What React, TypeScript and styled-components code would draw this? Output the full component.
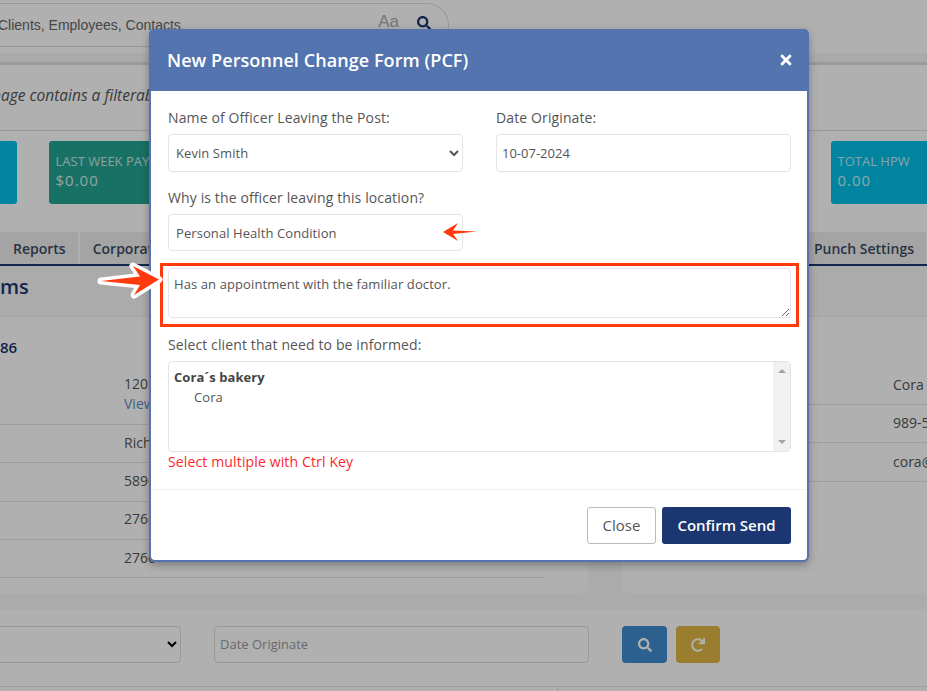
import React from "react";
import styled, { createGlobalStyle } from "styled-components";
import { FaSearch, FaRedo, FaTimes } from "react-icons/fa";

const GlobalStyle = createGlobalStyle`
html, body {
    margin: 0;
    padding: 0;
    background: #fff;
}
* {
    box-sizing: border-box;
}
body {
    font-family: "Open Sans", sans-serif;
    font-size: 14px;
    color: #555;
}
`;

const kpis = [
    { color: "#00bfe8", label: "", value: "" },
    { color: "#24a493", label: "LAST WEEK PAY", value: "$0.00" },
    { color: "#24a493", label: "", value: "" },
    { color: "#24a493", label: "", value: "" },
    { color: "#24a493", label: "", value: "" },
    { color: "#00bfe8", label: "TOTAL HPW", value: "0.00" },
];

const App = () => {
    return (
        <Page>
            <GlobalStyle />

            <TopBar>
                <SearchPill>
                    <SearchText>Clients, Employees, Contacts</SearchText>
                    <CaseToggle>Aa</CaseToggle>
                    <SearchIcon>
                        <FaSearch />
                    </SearchIcon>
                </SearchPill>
            </TopBar>
            <Strip />

            <Intro>page contains a filterable</Intro>

            <KpiRow>
                {kpis.map((k, i) => (
                    <KpiCard key={i} $color={k.color}>
                        <KpiLabel>{k.label}</KpiLabel>
                        <KpiValue>{k.value}</KpiValue>
                    </KpiCard>
                ))}
            </KpiRow>

            <TabBar>
                <TabGroup>
                    <Tab>Reports</Tab>
                    <Tab>Corporate</Tab>
                </TabGroup>
                <TabGroup>
                    <Tab>Punch Settings</Tab>
                </TabGroup>
            </TabBar>

            <SectionHead>ms</SectionHead>

            <Panels>
                <LeftPanel>
                    <PanelTitle>86</PanelTitle>
                    <TallRow>
                        <span>1205</span>
                        <RowLink>View</RowLink>
                    </TallRow>
                    <InfoRow>Richard</InfoRow>
                    <InfoRow>5896</InfoRow>
                    <InfoRow>2766</InfoRow>
                    <InfoRow>2766</InfoRow>
                </LeftPanel>
                <RightPanel>
                    <PanelTitle />
                    <RightRow>Cora</RightRow>
                    <RightRow>989-555</RightRow>
                    <RightRow>cora@</RightRow>
                </RightPanel>
            </Panels>

            <FilterRow>
                <FilterSelect>
                    <option></option>
                </FilterSelect>
                <FilterInput placeholder="Date Originate" />
                <FilterButtons>
                    <IconButton $color="#3f8bd0">
                        <FaSearch />
                    </IconButton>
                    <IconButton $color="#e0b545">
                        <FaRedo />
                    </IconButton>
                </FilterButtons>
            </FilterRow>
            <TableHead>
                <TableHeadCell />
            </TableHead>

            <Backdrop />

            <Modal>
                <ModalHeader>
                    <ModalTitle>New Personnel Change Form (PCF)</ModalTitle>
                    <CloseX>
                        <FaTimes />
                    </CloseX>
                </ModalHeader>

                <ModalBody>
                    <TwoCols>
                        <Field>
                            <Label>Name of Officer Leaving the Post:</Label>
                            <Select defaultValue="Kevin Smith">
                                <option>Kevin Smith</option>
                            </Select>
                        </Field>
                        <Field>
                            <Label>Date Originate:</Label>
                            <DateInput defaultValue="10-07-2024" />
                        </Field>
                    </TwoCols>

                    <TwoCols>
                        <Field>
                            <Label>Why is the officer leaving this location?</Label>
                            <ReasonInput defaultValue="Personal Health Condition" />
                        </Field>
                    </TwoCols>

                    <NoteWrap>
                        <Note defaultValue="Has an appointment with the familiar doctor." />
                        <Highlight />
                    </NoteWrap>

                    <Field>
                        <Label>Select client that need to be informed:</Label>
                        <ListBox>
                            <ListItems>
                                <GroupName>Cora´s bakery</GroupName>
                                <GroupItem>Cora</GroupItem>
                            </ListItems>
                            <ScrollTrack>
                                <ArrowUp />
                                <ArrowDown />
                            </ScrollTrack>
                        </ListBox>
                        <Hint>Select multiple with Ctrl Key</Hint>
                    </Field>
                </ModalBody>

                <ModalFooter>
                    <CloseButton>Close</CloseButton>
                    <ConfirmButton>Confirm Send</ConfirmButton>
                </ModalFooter>
            </Modal>

            <Callouts viewBox="0 0 927 691">
                <path
                    d="M101 281 L140 276.5 L133 266 L159 279.5 L134 295 L140 285 Z"
                    fill="#ff3a0c"
                    stroke="#fff"
                    strokeWidth="7"
                    strokeLinejoin="round"
                    paintOrder="stroke"
                />
                <path
                    d="M443 232 L458 223 L453 230.5 L477 231.5 L453 234 L458 241 Z"
                    fill="#ff3a0c"
                />
            </Callouts>
        </Page>
    );
};

export default App;

const Page = styled.div`
position: relative;
width: 927px;
height: 691px;
overflow: hidden;
background-color: #fff;
`;

const TopBar = styled.div`
height: 53px;
padding-top: 3px;
`;

const SearchPill = styled.div`
width: 449px;
height: 44px;
display: flex;
align-items: center;
border: 1px solid #ddd;
border-left: none;
border-radius: 0 22px 22px 0;
`;

const SearchText = styled.div`
margin-left: -2px;
flex: 1;
font-family: "Liberation Sans", Arial, sans-serif;
font-size: 14px;
color: #666;
`;

const CaseToggle = styled.div`
font-family: "Liberation Sans", Arial, sans-serif;
font-size: 17px;
color: #aaa;
margin-right: 18px;
margin-top: -7px;
`;

const SearchIcon = styled.div`
display: flex;
font-size: 14px;
color: #1b3670;
margin-right: 17px;
margin-top: -4px;
`;

const Strip = styled.div`
height: 12px;
background-color: #f7f7f7;
border-bottom: 3px solid #dedee3;
`;

const Intro = styled.div`
height: 66px;
padding-top: 19px;
margin-left: -8px;
font-style: italic;
font-size: 15.5px;
color: #555;
border-bottom: 1px solid #ddd;
`;

const KpiRow = styled.div`
height: 101px;
padding-top: 10px;
display: flex;
gap: 31.5px;
margin-left: -147px;
`;

const KpiCard = styled.div<{ $color: string }>`
flex: none;
width: 164px;
height: 63px;
padding: 12px 7px;
border-radius: 3px;
background-color: ${(p) => p.$color};
color: #fff;
`;

const KpiLabel = styled.div`
font-size: 13px;
line-height: 17px;
opacity: 0.75;
`;

const KpiValue = styled.div`
font-size: 15px;
line-height: 21px;
letter-spacing: 1px;
opacity: 0.8;
`;

const TabBar = styled.div`
height: 34px;
display: flex;
justify-content: space-between;
border-bottom: 2px solid #1b3670;
padding-right: 1px;
`;

const TabGroup = styled.div`
display: flex;
gap: 2px;
`;

const Tab = styled.div`
height: 32px;
padding: 0 12px 0 13px;
display: flex;
align-items: center;
background-color: #eee;
font-size: 14px;
font-weight: 600;
color: #3c4a60;
`;

const SectionHead = styled.div`
height: 51px;
padding-top: 6px;
background-color: #f8f8f8;
border-bottom: 1px solid #f0f0f0;
font-size: 20px;
font-weight: 600;
line-height: 30px;
color: #1b3670;
`;

const Panels = styled.div`
height: 276px;
display: flex;
gap: 34px;
background-color: #f8f8f8;
`;

const LeftPanel = styled.div`
flex: none;
width: 588px;
height: 276px;
padding-right: 44px;
background-color: #fff;
border-radius: 0 0 8px 0;
`;

const RightPanel = styled.div`
flex: 1;
height: 276px;
background-color: #fff;
border-radius: 0 0 0 8px;
`;

const PanelTitle = styled.div`
height: 49px;
padding-top: 19px;
font-size: 15px;
font-weight: 600;
line-height: 22px;
color: #1b3670;
`;

const InfoRow = styled.div`
height: 38.3px;
padding: 0 0 3px 124px;
display: flex;
align-items: center;
border-bottom: 1px solid #dfe5ee;
font-size: 14px;
color: #555;
`;

const TallRow = styled.div`
height: 59px;
padding: 8px 0 0 124px;
display: flex;
flex-direction: column;
border-bottom: 1px solid #dfe5ee;
font-size: 14px;
line-height: 20px;
color: #555;
`;

const RowLink = styled.span`
color: #5f8cc0;
`;

const RightRow = styled.div`
height: 38.5px;
padding: 0 0 1px 271px;
display: flex;
align-items: center;
border-bottom: 1px solid #dfe5ee;
font-size: 14px;
color: #555;
white-space: nowrap;
overflow: hidden;
`;

const FilterRow = styled.div`
height: 93px;
padding-top: 17px;
background-color: #fff;
display: flex;
align-items: flex-start;
margin-left: -200px;
border-top: 16px solid #f8f8f8;
`;

const FilterSelect = styled.select`
width: 381px;
height: 37px;
border: 1px solid #ddd;
border-radius: 4px;
background-color: #fff;
font-family: "Open Sans", sans-serif;
font-size: 13px;
`;

const FilterInput = styled.input`
width: 375px;
height: 37px;
margin-left: 33px;
padding: 0 5px 2px;
border: 1px solid #ddd;
border-radius: 4px;
font-family: "Open Sans", sans-serif;
font-size: 13px;

&::placeholder {
    color: #999;
}
`;

const FilterButtons = styled.div`
display: flex;
gap: 9px;
margin-left: 33px;
`;

const IconButton = styled.div<{ $color: string }>`
height: 37px;
width: 45px;
display: flex;
justify-content: center;
align-items: center;
border-radius: 4px;
background-color: ${(p) => p.$color};
color: #fff;
font-size: 14px;

& + & {
    width: 44px;
}
`;

const TableHead = styled.div`
height: 10px;
border-top: 1px solid #e4e4e4;
`;

const TableHeadCell = styled.div`
width: 558px;
height: 100%;
border-right: 1px solid #e4e4e4;
`;

const Backdrop = styled.div`
position: absolute;
top: 0;
left: 0;
right: 0;
bottom: 0;
background-color: rgba(0, 0, 0, 0.31);
`;

const Modal = styled.div`
position: absolute;
top: 29px;
left: 149px;
width: 660px;
height: 533px;
display: flex;
flex-direction: column;
background-color: #fff;
border: 2px solid #5374ae;
border-radius: 6px;
box-shadow: 0 3px 9px rgba(0, 0, 0, 0.3);
`;

const ModalHeader = styled.div`
flex: none;
height: 62px;
margin: -2px -2px 0;
padding: 0 15px 0 18px;
display: flex;
justify-content: space-between;
align-items: center;
background-color: #5374ae;
border-radius: 5px 5px 0 0;
`;

const ModalTitle = styled.div`
font-size: 18px;
font-weight: 600;
letter-spacing: 0.07px;
color: #fff;
`;

const CloseX = styled.div`
display: flex;
font-size: 16px;
color: #fff;
`;

const ModalBody = styled.div`
flex: 1;
padding: 17px 16px 0 17px;
border-bottom: 1px solid #f0f0f0;
display: flex;
flex-direction: column;
`;

const TwoCols = styled.div`
display: grid;
grid-template-columns: 295px 295px;
column-gap: 33px;
margin-bottom: 16px;

& + & {
    margin-bottom: 17px;
}
`;

const Field = styled.div`
display: flex;
flex-direction: column;
`;

const Label = styled.label`
height: 20px;
margin-bottom: 6px;
font-size: 14px;
line-height: 20px;
letter-spacing: 0.12px;
color: #555;
`;

const Select = styled.select`
height: 38px;
padding: 0 3px;
border: 1px solid #e4e4e4;
border-radius: 4px;
background-color: #fff;
font-family: "Open Sans", sans-serif;
font-size: 13px;
letter-spacing: 0.08px;
color: #555;
outline: none;
`;

const DateInput = styled.input`
height: 38px;
padding: 0 5px;
border: 1px solid #e4e4e4;
border-radius: 4px;
font-family: "Open Sans", sans-serif;
font-size: 13px;
color: #555;
outline: none;
`;

const ReasonInput = styled.input`
height: 37px;
padding: 0 7px;
border: 1px solid #e4e4e4;
border-radius: 4px;
font-family: "Open Sans", sans-serif;
font-size: 13px;
letter-spacing: 0.08px;
color: #555;
outline: none;
`;

const NoteWrap = styled.div`
position: relative;
height: 50px;
margin-bottom: 17px;
`;

const Note = styled.textarea`
display: block;
width: 100%;
height: 50px;
padding: 6px 5px;
border: 1px solid #e4e4e4;
border-radius: 4px;
font-family: "Open Sans", sans-serif;
font-size: 13px;
line-height: 19px;
letter-spacing: 0.1px;
color: #555;
outline: none;
`;

const Highlight = styled.div`
position: absolute;
top: -5px;
bottom: -9px;
left: -8px;
right: -8px;
border: 3px solid #ff3a0c;
pointer-events: none;
`;

const ListBox = styled.div`
height: 91px;
display: flex;
border: 1px solid #e4e4e4;
border-radius: 4px;
overflow: hidden;
`;

const ListItems = styled.div`
flex: 1;
padding: 5px 5px;
font-size: 13px;
line-height: 20px;
letter-spacing: 0.08px;
color: #555;
`;

const GroupName = styled.div`
font-weight: 700;
color: #444;
`;

const GroupItem = styled.div`
padding-left: 20px;
`;

const ScrollTrack = styled.div`
width: 17px;
display: flex;
flex-direction: column;
justify-content: space-between;
align-items: center;
padding: 7px 0;
background-color: #f1f1f1;
`;

const ArrowUp = styled.div`
width: 0;
height: 0;
border-left: 4px solid transparent;
border-right: 4px solid transparent;
border-bottom: 4px solid #a3a3a3;
`;

const ArrowDown = styled.div`
width: 0;
height: 0;
border-left: 4px solid transparent;
border-right: 4px solid transparent;
border-top: 4px solid #a3a3a3;
`;

const Hint = styled.div`
font-size: 14px;
line-height: 20px;
letter-spacing: 0.14px;
color: #ff1f2d;
`;

const ModalFooter = styled.div`
flex: none;
height: 70px;
padding: 17px 16px 0;
display: flex;
justify-content: flex-end;
gap: 6px;
`;

const CloseButton = styled.div`
width: 69px;
height: 37px;
padding-bottom: 2px;
display: flex;
justify-content: center;
align-items: center;
border: 1px solid #bbb;
border-radius: 3px;
font-size: 15px;
color: #555;
`;

const ConfirmButton = styled.div`
width: 129px;
height: 37px;
padding-bottom: 2px;
display: flex;
justify-content: center;
align-items: center;
border-radius: 3px;
background-color: #1b3670;
font-size: 15px;
font-weight: 600;
color: #fff;
`;

const Callouts = styled.svg`
position: absolute;
top: 0;
left: 0;
width: 927px;
height: 691px;
pointer-events: none;
`;
